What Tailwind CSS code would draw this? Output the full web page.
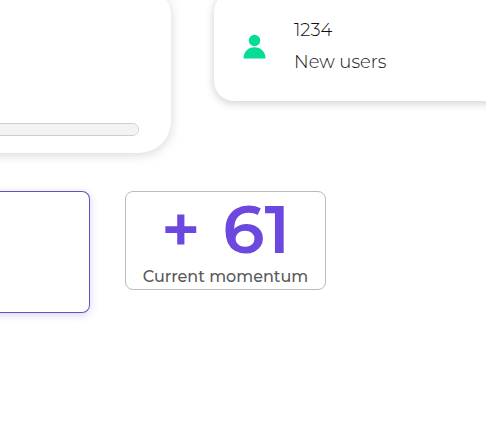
<!DOCTYPE html>
<html lang="en">
<head>
<meta charset="utf-8">
<meta name="viewport" content="width=device-width, initial-scale=1">
<title>Dashboard</title>
<script src="https://cdn.jsdelivr.net/npm/@tailwindcss/browser@4"></script>
</head>
<body class="min-h-screen overflow-x-hidden bg-white font-[Montserrat,Inter,sans-serif]">
<main class="overflow-hidden">
  <div class="-mx-6 flex items-start gap-[43px]">
    <section aria-label="Progress" class="-mt-4 flex h-[169px] w-[195px] shrink-0 items-end rounded-r-[32px] bg-white pr-8 pb-4 shadow-[0_2px_12px_rgba(0,0,0,0.16)]">
      <progress aria-label="Progress" value="0" max="100" class="mb-px block h-[13px] w-full appearance-none overflow-hidden rounded-r-full border border-l-0 border-[#c9ced2] bg-[#f3f3f3] [&::-webkit-progress-bar]:bg-[#f3f3f3]"></progress>
    </section>
    <section aria-label="New users" class="-mt-2 flex min-w-0 flex-1 items-start gap-7 rounded-l-[20px] bg-white pt-[22px] pb-[23px] pl-7 shadow-[0_2px_10px_rgba(0,0,0,0.2)]">
      <svg class="mt-[18px] h-7 w-6 shrink-0" viewBox="0 0 24 28" fill="#06dc97" aria-hidden="true">
        <circle cx="12.5" cy="8.5" r="5.7"/>
        <path d="M1.5 26.5C1.5 20 6 15.2 12.5 15.2S23.5 20 23.5 26.5Z"/>
      </svg>
      <div class="text-[18px] leading-8 font-light text-[#111111]">
        <p>1234</p>
        <p>New users</p>
      </div>
    </section>
  </div>
  <div class="-ml-6 flex items-start gap-[35px] pt-[38px] pb-6">
    <section aria-label="Summary" class="h-[122px] w-[114px] shrink-0 rounded-r-lg border border-l-0 border-[#6550c0] bg-white shadow-[0_2px_8px_rgba(80,60,180,0.22)]"></section>
    <section class="flex h-[99px] w-[201px] flex-col items-center rounded-lg border border-[#b9bbbd] bg-white">
      <p class="flex h-[75px] items-center gap-[22px] text-[67px] font-semibold text-[#6c48df]"><span>+</span><span>61</span></p>
      <p class="text-[16px] leading-5 font-medium whitespace-nowrap text-[#5a5a5a]">Current momentum</p>
    </section>
  </div>
</main>
</body>
</html>
